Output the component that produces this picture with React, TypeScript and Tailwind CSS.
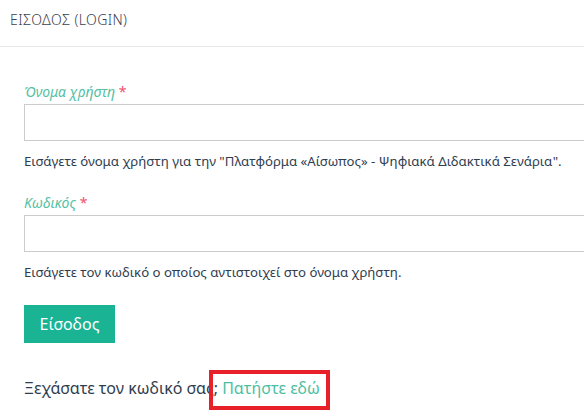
import React from 'react';

const font = { fontFamily: '"Noto Sans", "Open Sans", sans-serif' };

const Field: React.FC<{ label: string; help: string; type?: string }> = ({ label, help, type = 'text' }) => (
  <div>
    <label className="block h-[24px] pt-[3px] text-[14px] leading-[18px] italic text-[#55bfa3]">
      {label} <span className="text-[#f0506e] not-italic">*</span>
    </label>
    <input
      type={type}
      className="block h-[37px] w-[620px] border border-[#cccccc] bg-white outline-none"
    />
    <p className="mt-[11px] h-[39px] text-[13.2px] leading-[18px] text-[#2f3d4f]">{help}</p>
  </div>
);

export default function App() {
  return (
    <div className="h-[419px] w-[584px] overflow-hidden bg-white" style={font}>
      <div className="flex h-[47px] items-center border-b border-[#e6e6e6] px-[10px] pb-[7px]">
        <h1 className="text-[14px] font-light tracking-[0.4px] text-[#3a4250]">ΕΙΣΟΔΟΣ (LOGIN)</h1>
      </div>
      <form className="pl-[24px] pt-[33px]">
        <Field
          label="Όνομα χρήστη"
          help={'Εισάγετε όνομα χρήστη για την "Πλατφόρμα «Αίσωπος» - Ψηφιακά Διδακτικά Σενάρια".'}
        />
        <Field label="Κωδικός" type="password" help="Εισάγετε τον κωδικό ο οποίος αντιστοιχεί στο όνομα χρήστη." />
        <button
          type="button"
          className="mt-[3px] block h-[38px] w-[91px] bg-[#1ab394] text-[16px] text-white"
        >
          Είσοδος
        </button>
        <div className="relative mt-[35px] text-[16px] leading-[20px] text-[#2f3d4f]">
          Ξεχάσατε τον κωδικό σας;{' '}
          <a className="text-[#4cbfa2]">Πατήστε εδώ</a>
          <div className="absolute left-[185px] top-[-8px] h-[40px] w-[121px] border-[4px] border-[#e8202a]" />
        </div>
      </form>
    </div>
  );
}
